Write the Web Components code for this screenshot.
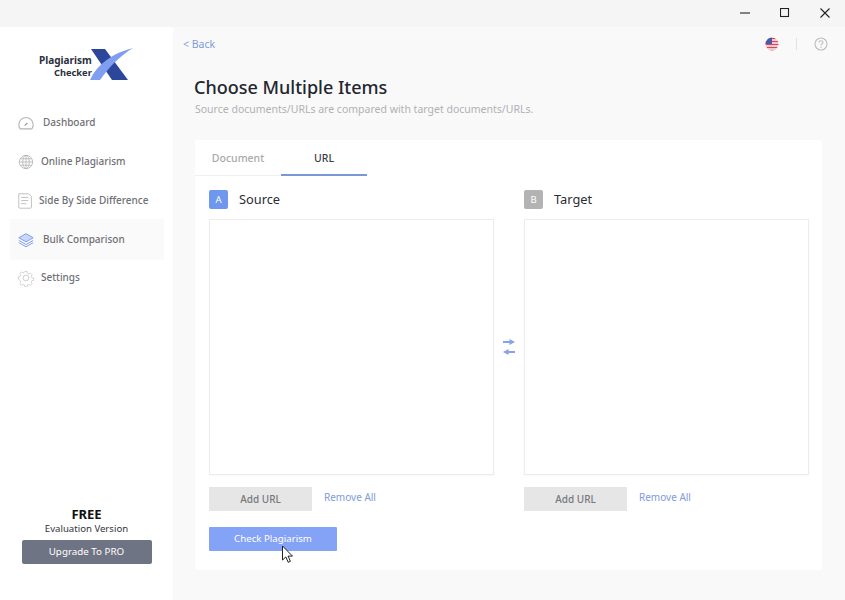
<!DOCTYPE html>
<html lang="en">
<head>
<meta charset="utf-8">
<title>Plagiarism Checker X</title>
<style>
    html, body { margin: 0; height: 100%; }
    body { width: 845px; height: 600px; overflow: hidden; font-family: "Noto Sans", "Open Sans", sans-serif; background: #f9f9f9; }
</style>
</head>
<body>
<app-window>
    <title-bar slot="top"></title-bar>
    <side-nav slot="side"></side-nav>
    <main-view slot="main"></main-view>
</app-window>

<script>
(() => {
    const define = (name, css, html) => {
        customElements.define(name, class extends HTMLElement {
            constructor() {
                super();
                const root = this.attachShadow({ mode: 'open' });
                root.innerHTML = `<style>${css}</style>${typeof html === 'function' ? html(this) : html}`;
            }
        });
    };

    define('app-window', `
        :host { display: grid; grid-template-columns: 173px 672px; grid-template-rows: 27px 573px; width: 845px; height: 600px; position: relative; }
        ::slotted([slot="top"]) { grid-column: 1 / 3; }
        .cursor { position: absolute; left: 281px; top: 545px; }
    `, `
        <slot name="top"></slot><slot name="side"></slot><slot name="main"></slot>
        <svg class="cursor" width="13" height="19" viewBox="0 0 13 19"><path d="M1.500 1v14l3.400-3.100 2.300 5.400 2.200-1-2.300-5.200h4.400z" fill="#fff" stroke="#222" stroke-width="1"/></svg>
    `);

    define('title-bar', `
        :host { display: flex; justify-content: flex-end; background: #f5f5f5; height: 27px; }
        .b { width: 40px; height: 27px; display: flex; align-items: center; justify-content: center; }
        .b:first-child { width: 39px; }
        .b svg { display: block; position: relative; top: -1px; }
    `, `
        <div class="b"><svg width="10" height="10" viewBox="0 0 10 10"><path d="M0 5h10" stroke="#222" stroke-width="1.100"/></svg></div>
        <div class="b"><svg width="10" height="10" viewBox="0 0 10 10"><rect x=".5" y=".5" width="8" height="8" fill="none" stroke="#222" stroke-width="1.100"/></svg></div>
        <div class="b"><svg width="10" height="10" viewBox="0 0 10 10"><path d="M.5.5l9 9M9.500.5l-9 9" stroke="#222" stroke-width="1.100"/></svg></div>
    `);

    define('app-logo', `
        :host { display: block; position: relative; width: 100px; height: 34px; font: 700 10px/11px "Noto Sans", sans-serif; color: #2a2f3e; }
        .t { position: absolute; white-space: nowrap; }
        svg { position: absolute; left: 51px; top: 0; }
    `, `
        <svg width="54" height="34" viewBox="0 0 54 34">
            <path d="M2 2h14l23 31H23z" fill="#2c469c"/>
            <path d="M1 33C8 17 24 6 44 1 31 9 21 19 11 33z" fill="#7f9ef0"/>
        </svg>
        <span class="t" style="left:1px;top:8px">Plagiarism</span>
        <span class="t" style="left:16px;top:20px;font-size:9.300px">Checker</span>
    `);

    const icons = {
        dash: `<path d="M3.500 16.500a8 8 0 1 1 13 0z" fill="none" stroke="#b4b4b4" stroke-width="1.200"/><path d="M8.500 13l3-3" stroke="#9a9a9a" stroke-width="1.300"/>`,
        globe: `<g fill="none" stroke="#b4b4b4" stroke-width=".9"><circle cx="10" cy="10" r="7.400"/><ellipse cx="10" cy="10" rx="3.600" ry="7.400"/><path d="M10 2.600v14.800M2.600 10h14.800M3.600 6.400h12.800M3.600 13.600h12.800"/></g>`,
        doc: `<g fill="none" stroke="#c0c0c0" stroke-width="1.100"><path d="M2 2h11l3 3v12a1 1 0 0 1-1 1H3a1 1 0 0 1-1-1z"/><path d="M4.500 6h8M4.500 9.500h8M4.500 13h6"/></g>`,
        stack: `<g fill="none" stroke="#7f9ef0" stroke-width="1.100"><path d="M10 3l8 4.500-8 4.500-8-4.500z" fill="#c9d7f8"/><path d="M2 10.500l8 4.500 8-4.500M2 13l8 4.500 8-4.500"/></g>`,
        gear: `<g fill="none" stroke="#c4c4c4" stroke-width=".9"><circle cx="10" cy="10" r="3.200"/><path d="M8.600 2h2.800l.5 2.300 1.700.8 2-1.200 2 2-1.200 2 .7 1.700 2.300.5v2.800l-2.300.5-.7 1.700 1.200 2-2 2-2-1.200-1.700.7-.5 2.300H8.600l-.5-2.300-1.700-.7-2 1.200-2-2 1.200-2-.7-1.700L.6 11.400V8.600l2.300-.5.7-1.700-1.200-2 2-2 2 1.200 1.700-.8z" transform="translate(1 1) scale(.9)"/></g>`
    };

    define('nav-item', `
        :host { display: flex; align-items: center; height: 39px; font-size: 10px; font-weight: 500; color: #6f7076; white-space: nowrap; box-sizing: border-box; margin: 0 9px 0 10px; padding-left: 7px; }
        :host([active]) { background: #fafafa; height: 41px; margin-top: -1px; margin-bottom: -2px; }
        svg { flex: none; display: block; }
        span { display: block; margin-top: -1px; }
    `, el => `
        <svg width="18" height="18" viewBox="0 0 20 20">${icons[el.getAttribute('icon')]}</svg>
        <span style="margin-left:${el.getAttribute('gap')}px"><slot></slot></span>
    `);

    define('side-nav', `
        :host { display: flex; flex-direction: column; background: #fff; height: 573px; box-sizing: border-box; padding-top: 20px; }
        app-logo { margin-left: 38px; }
        nav { margin-top: 22px; display: flex; flex-direction: column; }
        .foot { margin-top: auto; padding-bottom: 36px; display: flex; flex-direction: column; align-items: center; color: #222; }
        b { font-size: 13px; line-height: 18px; font-weight: 700; color: #111; position: relative; top: 1px; }
        small { font-size: 9.600px; line-height: 14px; color: #33353a; margin-bottom: 4px; }
        .up { width: 130px; height: 24px; background: #6f7484; color: #fff; font-size: 9.800px; line-height: 23px; text-align: center; border-radius: 2px; }
    `, `
        <app-logo></app-logo>
        <nav>
            <nav-item icon="dash" gap="8">Dashboard</nav-item>
            <nav-item icon="globe" gap="6">Online Plagiarism</nav-item>
            <nav-item icon="doc" gap="4">Side By Side Difference</nav-item>
            <nav-item icon="stack" gap="8" active>Bulk Comparison</nav-item>
            <nav-item icon="gear" gap="6">Settings</nav-item>
        </nav>
        <div class="foot">
            <b>FREE</b>
            <small>Evaluation Version</small>
            <div class="up">Upgrade To PRO</div>
        </div>
    `);

    define('item-column', `
        :host { display: flex; flex-direction: column; width: 285px; }
        .head { display: flex; align-items: center; height: 20px; gap: 11px; font-size: 12.800px; color: #2a2d33; }
        .tag { width: 19px; height: 19px; border-radius: 2px; color: #fff; font-size: 9.500px; display: flex; align-items: center; justify-content: center; background: var(--tag, #b3b3b3); }
        .box { height: 256px; margin-top: 10px; box-sizing: border-box; border: 1px solid #ececec; background: #fff; box-shadow: 0 1px 2px rgba(0,0,0,.03); }
        .row { display: flex; align-items: flex-start; margin-top: 12px; gap: 12px; }
        .add { width: 103px; height: 24px; background: #e6e6e6; color: #77787c; font-size: 10px; font-weight: 500; line-height: 24px; text-align: center; }
        .rm { font-size: 10px; line-height: 20px; color: #7e9bdc; }
    `, el => `
        <div class="head"><span class="tag">${el.getAttribute('letter')}</span><span>${el.getAttribute('label')}</span></div>
        <div class="box"></div>
        <div class="row"><div class="add">Add URL</div><div class="rm">Remove All</div></div>
    `);

    define('main-view', `
        :host { display: flex; flex-direction: column; background: #f9f9f9; height: 573px; box-sizing: border-box; padding: 0 23px 30px 22px; }
        .top { display: flex; align-items: center; height: 34px; }
        .back { font-size: 10.500px; color: #7e9bdc; margin-left: -12px; }
        .flag { margin-left: auto; display: block; }
        .sep { width: 1px; height: 12px; background: #e2e2e2; margin: 0 17px; }
        .help { display: block; margin-right: -6px; }
        h1 { font-size: 18px; line-height: 24px; font-weight: 500; color: #22262e; margin: 14px 0 0 -1px; }
        p { font-size: 10.500px; line-height: 14px; color: #b1b1b4; margin: 3px 0 0; }
        .card { background: #fff; margin-top: 24px; flex: 1; display: flex; flex-direction: column; border-radius: 3px; }
        .tabs { display: flex; height: 36px; font-size: 10.500px; font-weight: 500; }
        .tab { width: 86px; text-align: center; line-height: 36px; color: #a9a9a9; box-sizing: border-box; border-bottom: 1px solid #f0f0f0; }
        .tab.on { color: #3b3e45; border-bottom: 2px solid #7a97d8; }
        .cols { display: flex; padding: 13px 13px 0 14px; align-items: flex-start; }
        .swap { width: 30px; margin-top: 150px; display: flex; justify-content: center; flex: none; }
        .swap svg { display: block; }
        .check { margin: 16px 0 0 14px; width: 128px; height: 24px; background: #84a3f6; color: #fff; font-size: 9.700px; line-height: 24px; text-align: center; border-radius: 1px; }
    `, `
        <div class="top">
            <span class="back">&lt; Back</span>
            <svg class="flag" width="14" height="14" viewBox="0 0 14 14">
                <clipPath id="c"><circle cx="7" cy="7" r="6.500"/></clipPath>
                <g clip-path="url(#c)">
                    <rect width="14" height="14" fill="#f4f4f4"/>
                    <path d="M0 1.500h14M0 4.500h14M0 7.500h14M0 10.500h14M0 13.500h14" stroke="#d9475a" stroke-width="1.400"/>
                    <rect width="7" height="7" fill="#4a5aa8"/>
                </g>
            </svg>
            <span class="sep"></span>
            <svg class="help" width="14" height="14" viewBox="0 0 14 14">
                <circle cx="7" cy="7" r="6" fill="none" stroke="#bdbdbd" stroke-width="1.100"/>
                <path d="M5 5.600C5 4.300 6 3.700 7 3.700s2.100.7 2 1.900C8.900 6.900 7 6.800 7 8.500" fill="none" stroke="#bdbdbd" stroke-width="1.100"/>
                <circle cx="7" cy="10.200" r=".7" fill="#bdbdbd"/>
            </svg>
        </div>
        <h1>Choose Multiple Items</h1>
        <p>Source documents/URLs are compared with target documents/URLs.</p>
        <div class="card">
            <div class="tabs"><div class="tab">Document</div><div class="tab on">URL</div></div>
            <div class="cols">
                <item-column letter="A" label="Source" style="--tag:#6f97ee"></item-column>
                <div class="swap">
                    <svg width="12" height="16" viewBox="0 0 12 16">
                        <path d="M0 3h8" stroke="#84a3ec" stroke-width="2"/><path d="M6.500 0l5.500 3-5.500 3z" fill="#84a3ec"/>
                        <path d="M12 13H4" stroke="#84a3ec" stroke-width="2"/><path d="M5.500 10L0 13l5.500 3z" fill="#84a3ec"/>
                    </svg>
                </div>
                <item-column letter="B" label="Target"></item-column>
            </div>
            <div class="check">Check Plagiarism</div>
        </div>
    `);
})();
</script>
</body>
</html>
